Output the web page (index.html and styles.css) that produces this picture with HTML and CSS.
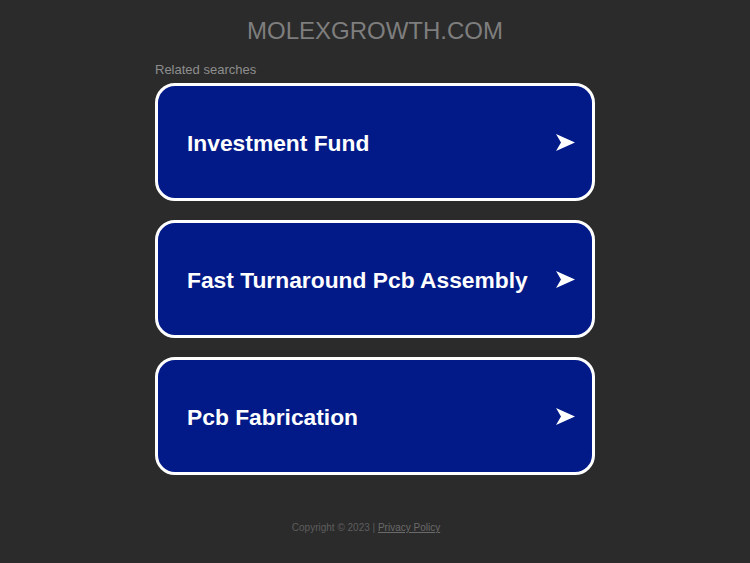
FILE: index.html
```html
<!DOCTYPE html>
<html>
<head>
<meta charset="utf-8">
<link rel="stylesheet" href="styles.css">
</head>
<body>
<div class="page">
  <h1 class="domain">MOLEXGROWTH.COM</h1>
  <div class="related">Related searches</div>
  <div class="cards">
    <a class="card" href="#"><span class="label">Investment Fund</span><svg class="arrow" width="19" height="17" viewBox="0 0 19 17"><polygon points="0,0 19,8.5 0,17 5,8.5" fill="#fff"/></svg></a>
    <a class="card" href="#"><span class="label">Fast Turnaround Pcb Assembly</span><svg class="arrow" width="19" height="17" viewBox="0 0 19 17"><polygon points="0,0 19,8.5 0,17 5,8.5" fill="#fff"/></svg></a>
    <a class="card" href="#"><span class="label">Pcb Fabrication</span><svg class="arrow" width="19" height="17" viewBox="0 0 19 17"><polygon points="0,0 19,8.5 0,17 5,8.5" fill="#fff"/></svg></a>
  </div>
  <div class="footer">Copyright © 2023 | <a href="#">Privacy Policy</a></div>
</div>
</body>
</html>
```

FILE: styles.css
```css
html, body {
  margin: 0;
  padding: 0;
  background: #2b2b2b;
  font-family: "Liberation Sans", Arial, sans-serif;
}
.page {
  width: 440px;
  margin: 0 auto;
  padding-top: 16px;
}
.domain {
  margin: 0;
  text-align: center;
  font-weight: normal;
  font-size: 24px;
  line-height: 29px;
  color: #7e7e7e;
}
.related {
  margin-top: 17px;
  font-size: 13px;
  line-height: 15px;
  color: #8e8e8e;
}
.cards {
  margin-top: 6px;
  display: flex;
  flex-direction: column;
  gap: 19px;
}
.card {
  box-sizing: border-box;
  height: 118px;
  border: 3px solid #fff;
  border-radius: 20px;
  background: #011a88;
  display: flex;
  align-items: center;
  justify-content: space-between;
  padding: 3px 17px 0 29px;
  text-decoration: none;
  color: #fff;
}
.label {
  font-weight: bold;
  font-size: 22.8px;
}
.arrow {
  display: block;
  margin-top: -2px;
}
.footer {
  margin-top: 47px;
  padding-right: 18px;
  text-align: center;
  font-size: 10px;
  color: #5e5e5e;
}
.footer a {
  color: #6a6a6a;
}
```
